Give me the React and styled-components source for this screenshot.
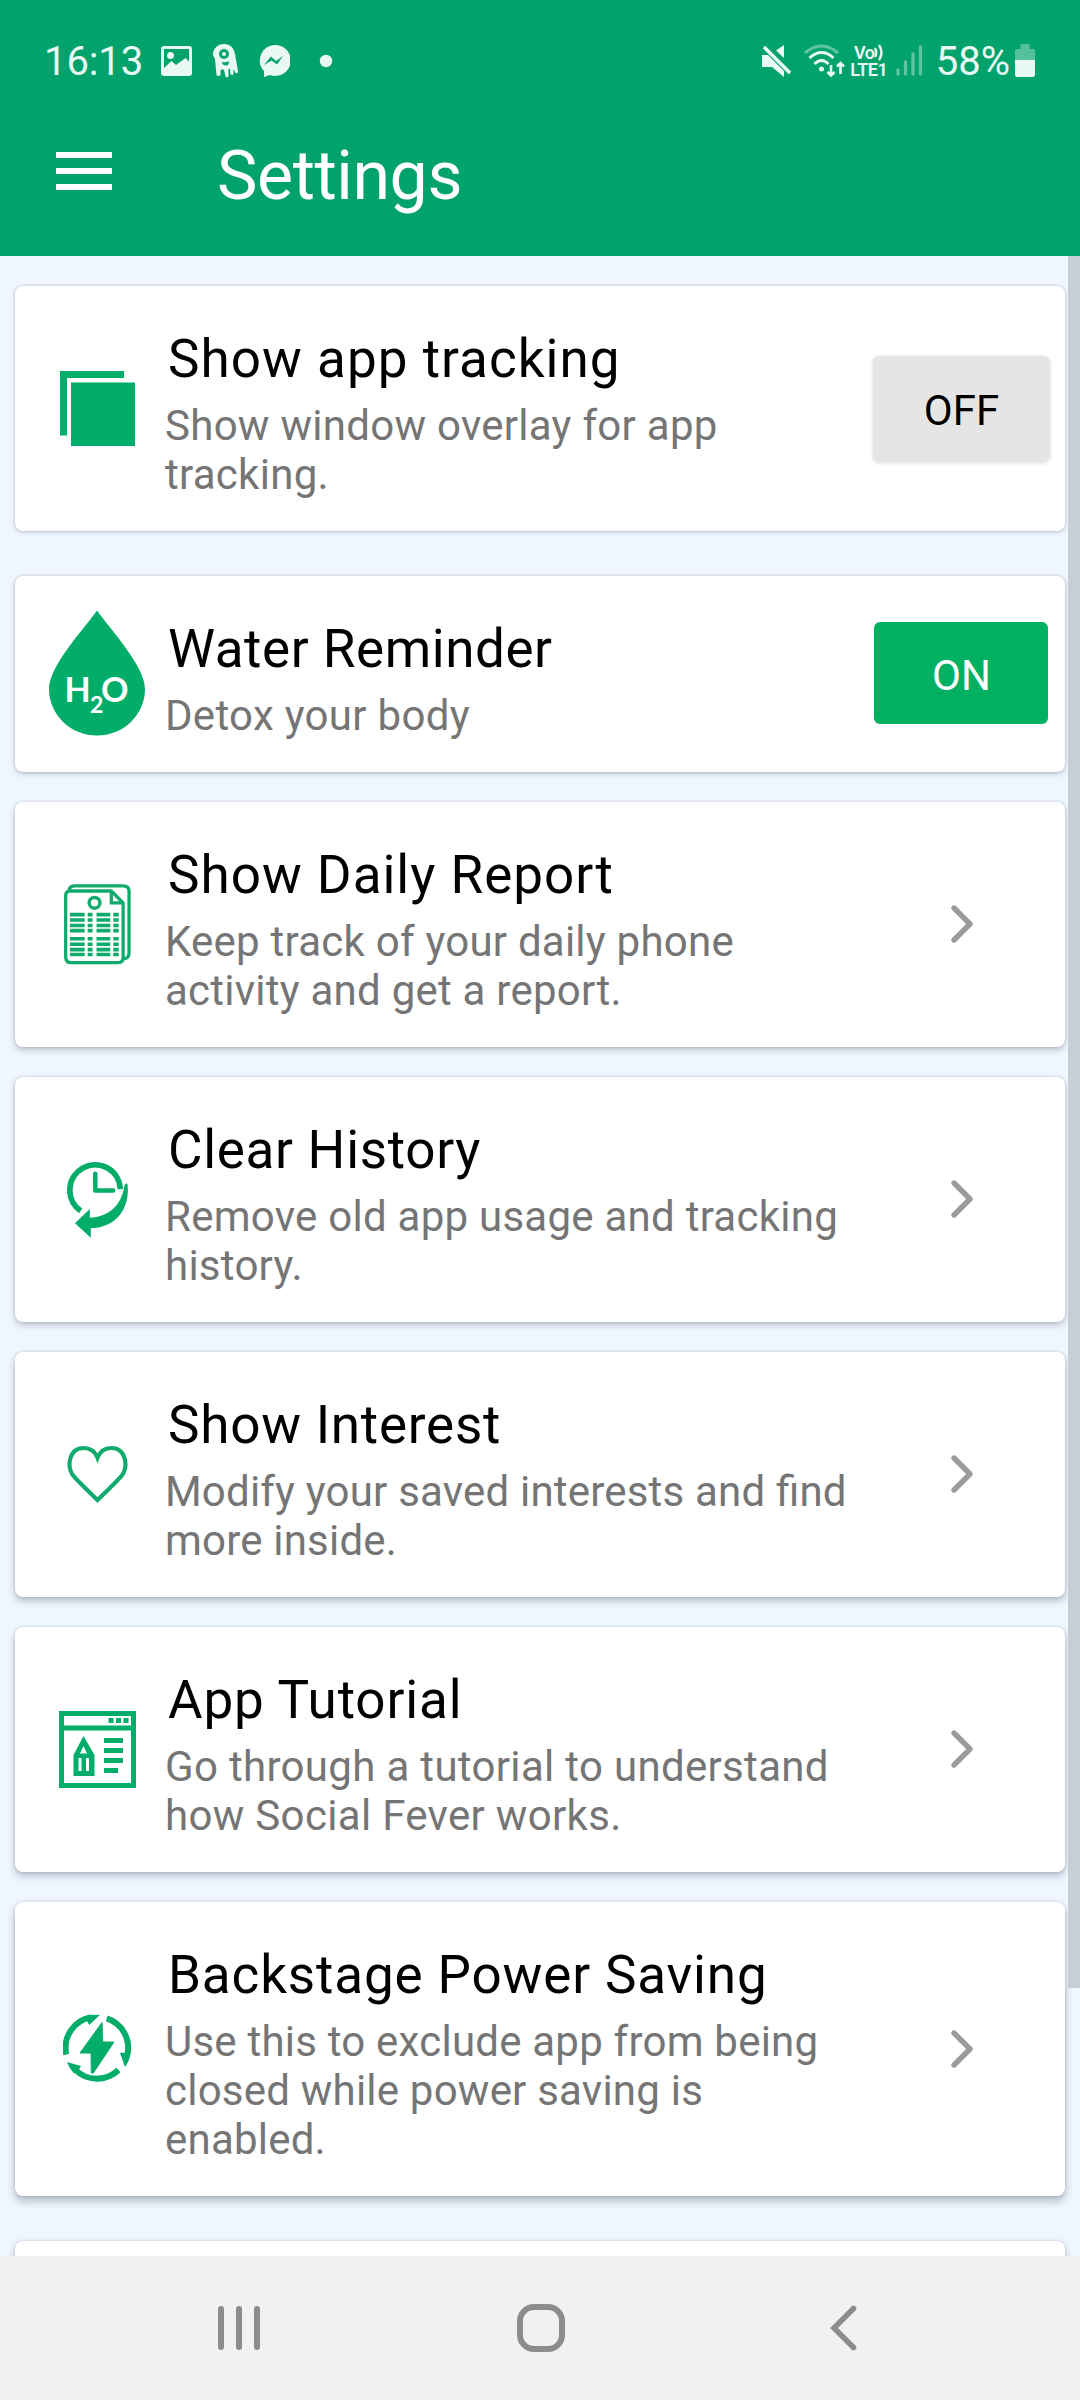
import React from "react";
import styled, { createGlobalStyle } from "styled-components";

const GREEN = "#02ad69";

const Global = createGlobalStyle`
  * { box-sizing: border-box; }
  body { margin: 0; background: #eff6ff; font-family: Roboto, "Liberation Sans", sans-serif; }
`;

const Screen = styled.div`
  display: flex;
  flex-direction: column;
  width: 1080px;
  height: 2400px;
  overflow: hidden;
  background: #eff6ff;
`;

const Header = styled.header`
  display: flex;
  flex-direction: column;
  flex: none;
  height: 256px;
  background: #02a26d;
  color: #fff;
`;

const StatusBar = styled.div`
  display: flex;
  align-items: center;
  justify-content: space-between;
  height: 121px;
  padding: 0 45px 0 44px;
  color: #e9f8f3;
`;

const StatusGroup = styled.div`
  display: flex;
  align-items: center;
`;

const StatusText = styled.span`
  padding-top: 3px;
  font-size: 40px;
  line-height: 48px;
  letter-spacing: ${(p) => p.$spacing || 0}px;
  margin-right: ${(p) => p.$after || 0}px;
`;

const StatusIcon = styled.svg`
  display: block;
  flex: none;
  margin-right: ${(p) => p.$after || 0}px;
`;

const Network = styled.div`
  display: flex;
  flex-direction: column;
  align-items: center;
  width: 38px;
  margin-right: 8px;
  font-size: 18px;
  font-weight: 600;
  line-height: 17px;
  letter-spacing: -0.5px;
`;

const VoRow = styled.div`
  display: flex;
  align-items: center;
  height: 17px;
`;

const TitleBar = styled.div`
  display: flex;
  align-items: center;
  height: 110px;
  padding-left: 56px;
`;

const MenuButton = styled.button`
  display: flex;
  flex-direction: column;
  gap: 10px;
  width: 56px;
  padding: 0;
  margin: -10px 105px 0 0;
  border: 0;
  background: none;
`;

const MenuLine = styled.span`
  height: 6px;
  background: #fff;
`;

const PageTitle = styled.h1`
  margin: 0;
  font-size: 68px;
  line-height: 80px;
  font-weight: 400;
  letter-spacing: -0.4px;
`;

const Content = styled.main`
  display: flex;
  flex: 1;
  min-height: 0;
  overflow: hidden;
`;

const List = styled.div`
  display: flex;
  flex-direction: column;
  flex: none;
  width: 1068px;
  padding: 30px 3px 0 15px;
`;

const ScrollThumb = styled.div`
  width: 12px;
  height: 1732px;
  background: #c7ced8;
`;

const Card = styled.section`
  display: flex;
  align-items: center;
  flex: none;
  min-height: ${(p) => p.$minHeight || 0}px;
  margin-bottom: ${(p) => p.$after || 30}px;
  border-radius: 8px;
  background: #fff;
  box-shadow: 0 ${(p) => p.$depth}px ${(p) => p.$depth + 3}px rgba(60, 70, 90, ${(p) => 0.2 + p.$depth * 0.03}), 0 0 3px rgba(60, 70, 90, 0.2);
`;

const IconCell = styled.div`
  display: flex;
  justify-content: center;
  align-items: center;
  flex: none;
  width: 150px;
  padding-left: 15px;
`;

const Copy = styled.div`
  width: 694px;
  padding: 42px 0 32px;
`;

const CardTitle = styled.h2`
  margin: 0 0 11px 3px;
  font-size: 53px;
  line-height: 62px;
  font-weight: 400;
  letter-spacing: ${(p) => p.$tracking}px;
  color: #000;
  white-space: nowrap;
`;

const Description = styled.p`
  margin: 0;
  font-size: 42px;
  line-height: 49px;
  letter-spacing: ${(p) => p.$tracking}px;
  font-feature-settings: "liga" 1;
  color: #757575;
`;

const Trailing = styled.div`
  display: flex;
  justify-content: center;
  flex: none;
  width: ${(p) => (p.$wide ? 206 : 204)}px;
`;

const Toggle = styled.button`
  display: flex;
  align-items: center;
  justify-content: center;
  width: ${(p) => (p.$on ? 174 : 177)}px;
  height: ${(p) => (p.$on ? 102 : 106)}px;
  padding: ${(p) => (p.$on ? 5 : 3)}px 0 0 1px;
  border: 0;
  border-radius: 6px;
  font: 400 42px Roboto, sans-serif;
  color: ${(p) => (p.$on ? "#fff" : "#000")};
  background: ${(p) => (p.$on ? "#02b062" : "#e5e5e5")};
  box-shadow: ${(p) => (p.$on ? "none" : "0 1px 4px rgba(0,0,0,0.14)")};
  margin-top: ${(p) => (p.$on ? -2 : 0)}px;
`;

const NavBar = styled.nav`
  display: flex;
  align-items: center;
  flex: none;
  height: 144px;
  padding: 0 210px 0 210px;
  justify-content: space-between;
  background: #f1f1f1;
`;

const WindowsIcon = () => (
  <svg width="75" height="75" viewBox="0 0 75 75" fill={GREEN}>
    <path d="M0 0H64V7H7V64.500H0Z" />
    <path d="M11 11.500H75V75H11Z" />
  </svg>
);

const DropText = styled.text`
  font-family: Lato, sans-serif;
  font-weight: 700;
  fill: #fff;
`;

const WaterIcon = () => (
  <svg width="97" height="126" viewBox="1 1 97 126">
    <path d="M49 0.5C62 19 97 56 97 79A48 46.500 0 0 1 1 79C1 56 36 19 49 0.500Z" fill={GREEN} />
    <DropText x="16.500" y="92" fontSize="34">H</DropText>
    <DropText x="42" y="103" fontSize="23">2</DropText>
    <DropText x="53" y="92" fontSize="34">O</DropText>
  </svg>
);

const ReportIcon = () => (
  <svg width="67" height="81" viewBox="0 0 68 82" fill="none" stroke="#0fab6c" strokeWidth="3.300">
    <path d="M5 6Q6 1.700 11 1.700H60Q66 1.700 66 7V70Q66 75 61 76" />
    <path d="M6 7H48L60 19V75Q60 79.800 54 79.800H7Q1.700 79.800 1.700 74V12Q1.700 7 6 7Z" />
    <path d="M48 7V19H60" />
    <ellipse cx="31" cy="19" rx="5.500" ry="5.500" strokeWidth="3.500" />
    {[31, 36.5, 42, 47.2, 55.5, 61, 66.5, 71.5].map((y) => (
      <path key={y} d={`M6 ${y}H21M24 ${y}H29M33 ${y}H47M50 ${y}H55.500`} strokeWidth="3.600" />
    ))}
  </svg>
);

const HistoryIcon = () => (
  <svg width="61" height="77" viewBox="0 0 61.500 77" fill={GREEN}>
    <path d="M13.800 50A25.500 25.500 0 1 1 53.800 28" fill="none" stroke={GREEN} strokeWidth="5.800" />
    <path d="M28.500 12.500V29.500H46.500" fill="none" stroke={GREEN} strokeWidth="4.600" strokeLinecap="round" strokeLinejoin="round" />
    <path d="M61 23C64 49 48 67 24 67.500V77L8 62.500L23 48V57C41 56 55 46 58 24C58.500 22 61 22 61 23Z" />
  </svg>
);

const HeartIcon = () => (
  <svg width="61" height="59" viewBox="0 0 62 60" fill="none" stroke="#0fab6c" strokeWidth="4.200">
    <path d="M31 56C22 47 13 39 7 32C-1 22 2 3 17 3C24 3 28.500 6.500 31 13C33.500 6.500 38 3 45 3C60 3 63 22 55 32C49 39 40 47 31 56Z" />
  </svg>
);

const TutorialIcon = () => (
  <svg width="77" height="77" viewBox="0 0 77 77" fill={GREEN}>
    <path fillRule="evenodd" d="M0 0H77V77H0ZM5 5V14.500H72V5ZM5 19.500V72H72V19.500Z" />
    <path d="M49.500 7H54.500V12H49.500ZM57 7H62V12H57ZM64.500 7H69.500V12H64.500Z" />
    <path fillRule="evenodd" d="M24.500 25L35.500 44V65H14.500V44ZM24.500 35L21 42.500H28ZM19.500 47V60H22.500V47ZM27 47V60H30V47Z" />
    <path d="M45 27H64V32H45ZM45 37H64V42H45ZM45 47H64V52H45ZM45 57H59V62H45Z" />
  </svg>
);

const PowerIcon = () => (
  <svg width="69" height="70" viewBox="0 0 69 70" fill={GREEN}>
    <path d="M39 8.500L39.700 28H51L30.300 59H28.300L28 39H17Z" stroke={GREEN} strokeLinejoin="round" />
    <path d="M3.300 40.500A31 31 0 0 1 28 3.300M43.800 4.300A31 31 0 0 1 64.500 40M55.500 56A31 31 0 0 1 12 55.500" fill="none" stroke={GREEN} strokeWidth="6" />
    <path d="M26 1L37 0.800L26.300 11L24 7ZM57 38.700L67.500 39Q67 46 62 53ZM4 48L18 52L16.300 55L11 59.500Q6 54 4 48Z" />
  </svg>
);

const ChevronSvg = styled.svg`
  display: block;
  margin-top: -1px;
`;

const Chevron = () => (
  <ChevronSvg width="24" height="40" viewBox="0 0 24 40" fill="none" stroke="#9b9b9b" strokeWidth="5.400" strokeLinecap="round" strokeLinejoin="round">
    <path d="M4 4L20 20L4 36" />
  </ChevronSvg>
);

const items = [
  { title: "Show app tracking", text: "Show window overlay for app tracking.", Icon: WindowsIcon, toggle: "OFF", after: 45, depth: 1, titleTracking: 1.04, textTracking: 0.28 },
  { title: "Water Reminder", text: "Detox your body", Icon: WaterIcon, toggle: "ON", after: 30, depth: 2, titleTracking: 0.55, textTracking: 0.3 },
  { title: "Show Daily Report", text: "Keep track of your daily phone activity and get a report.", Icon: ReportIcon, depth: 3, titleTracking: 1, textTracking: 0.24 },
  { title: "Clear History", text: "Remove old app usage and tracking history.", Icon: HistoryIcon, depth: 3, titleTracking: 0.7, textTracking: 0.26 },
  { title: "Show Interest", text: "Modify your saved interests and find more inside.", Icon: HeartIcon, depth: 4, titleTracking: 0.76, textTracking: 0.2 },
  { title: "App Tutorial", text: "Go through a tutorial to understand how Social Fever works.", Icon: TutorialIcon, depth: 4, titleTracking: 0.85, textTracking: 0.32 },
  { title: "Backstage Power Saving", text: "Use this to exclude app from being closed while power saving is enabled.", Icon: PowerIcon, after: 45, depth: 5, titleTracking: 0.85, textTracking: 0.22 },
];

export default function App() {
  return (
    <Screen>
      <Global />
      <Header>
        <StatusBar>
          <StatusGroup>
            <StatusText $after={18} $spacing={-0.1}>16:13</StatusText>
            <StatusIcon width="31" height="30" viewBox="0 0 31 30" $after={21} fill="currentColor">
              <path fillRule="evenodd" d="M3 0H28Q31 0 31 3V27Q31 30 28 30H3Q0 30 0 27V3Q0 0 3 0ZM3 3V22L10.500 15L15 19L24.500 12L28 15.500V3Z" />
              <circle cx="9.500" cy="9.500" r="3.500" />
            </StatusIcon>
            <StatusIcon width="25" height="34" viewBox="0 0 25 34" $after={20} fill="currentColor">
              <path fillRule="evenodd" d="M0 11C0 4 5 0 11 0C17 0 21 4 22 10L25 27Q25 30 22.500 29L20.500 25V30Q19 32 17.500 30L17 25Q15 24 15.500 27V32Q14 35 12.500 32L11 26Q8 24 7.500 27V31Q5 33 3.500 31L2 15ZM11 5A5 5 0 1 0 11 15A5 5 0 1 0 11 5ZM9 18Q13 19 16 17Q16 22 12.500 21.500Q9 21 9 18Z" />
              <circle cx="11" cy="10" r="2" />
            </StatusIcon>
            <StatusIcon width="32" height="33" viewBox="0 0 32 33" $after={29} fill="currentColor">
              <path fillRule="evenodd" d="M16 1A15.500 15.500 0 1 1 12 31L6 33V27A15.500 15.500 0 0 1 16 1ZM6 21L13 12.500L18 17L25 12L19 20.500L13.500 16.500Z" />
            </StatusIcon>
            <StatusIcon width="14" height="14" viewBox="0 0 14 14" fill="currentColor"><circle cx="7" cy="7" r="6.200" /></StatusIcon>
          </StatusGroup>
          <StatusGroup>
            <StatusIcon width="30" height="32" viewBox="0 0 30 32" $after={12} fill="currentColor">
              <path d="M0 10H6L22 26V32L10 22H0ZM22 0V13L14 5.500Z" />
              <path d="M2 2L28 28" stroke="currentColor" strokeWidth="3.500" />
            </StatusIcon>
            <StatusIcon width="42" height="34" viewBox="0 0 42 34" $after={4} fill="none" stroke="currentColor" strokeWidth="3">
              <path d="M1 9Q17.500 -5 34 9" opacity=".4" />
              <path d="M5.500 14Q17.500 3 29.500 14M10.500 20Q17.500 13 24.500 20" />
              <circle cx="17.500" cy="25" r="2.500" fill="currentColor" stroke="none" />
              <path d="M27 21V31M23.500 28L27 31.500L30.500 28M36.500 30V20M33 22.500L36.500 19L40 22.500" strokeWidth="2.600" />
            </StatusIcon>
            <Network>
              <VoRow>
                <span>Vo</span>
                <StatusIcon width="9" height="17" viewBox="0 0 9 17" fill="none" stroke="currentColor" strokeWidth="2.400"><path d="M1 4Q3.500 8.500 1 13M5 1Q10 8.500 5 16" /></StatusIcon>
              </VoRow>
              <span>LTE1</span>
            </Network>
            <StatusIcon width="27" height="31" viewBox="0 0 27 31" $after={13} stroke="currentColor" strokeWidth="3.300" strokeLinecap="round" opacity=".4">
              <path d="M2 25V29M9.500 17V29M17 9V29M24.500 2V29" />
            </StatusIcon>
            <StatusText $after={5}>58%</StatusText>
            <StatusIcon width="20" height="33" viewBox="0 0 20 33" fill="currentColor">
              <path d="M5.500 0H14.500V5H18Q20 5 20 7V16H0V7Q0 5 2 5H5.500Z" opacity=".36" />
              <path d="M0 16H20V31Q20 33 18 33H2Q0 33 0 31Z" />
            </StatusIcon>
          </StatusGroup>
        </StatusBar>
        <TitleBar>
          <MenuButton aria-label="Menu"><MenuLine /><MenuLine /><MenuLine /></MenuButton>
          <PageTitle>Settings</PageTitle>
        </TitleBar>
      </Header>
      <Content>
        <List>
          {items.map(({ title, text, Icon, toggle, after, depth, titleTracking, textTracking }) => (
            <Card key={title} $after={after} $depth={depth}>
              <IconCell><Icon /></IconCell>
              <Copy>
                <CardTitle $tracking={titleTracking}>{title}</CardTitle>
                <Description $tracking={textTracking}>{text}</Description>
              </Copy>
              <Trailing $wide={!toggle}>{toggle ? <Toggle $on={toggle === "ON"}>{toggle}</Toggle> : <Chevron />}</Trailing>
            </Card>
          ))}
          <Card $minHeight={200} $depth={5} />
        </List>
        <ScrollThumb />
      </Content>
      <NavBar>
        <svg width="56" height="50" viewBox="0 0 56 50" stroke="#8c8c8c" strokeWidth="6" strokeLinecap="round"><path d="M11 6V44M29 6V44M47 6V44" /></svg>
        <svg width="48" height="48" viewBox="0 0 48 48" fill="none" stroke="#8c8c8c" strokeWidth="6"><rect x="3" y="3" width="42" height="42" rx="14" /></svg>
        <svg width="54" height="50" viewBox="0 0 54 50" fill="none" stroke="#8c8c8c" strokeWidth="5.600" strokeLinecap="round"><path d="M37.500 5.500L18 25L37.500 44.500" /></svg>
      </NavBar>
    </Screen>
  );
}
